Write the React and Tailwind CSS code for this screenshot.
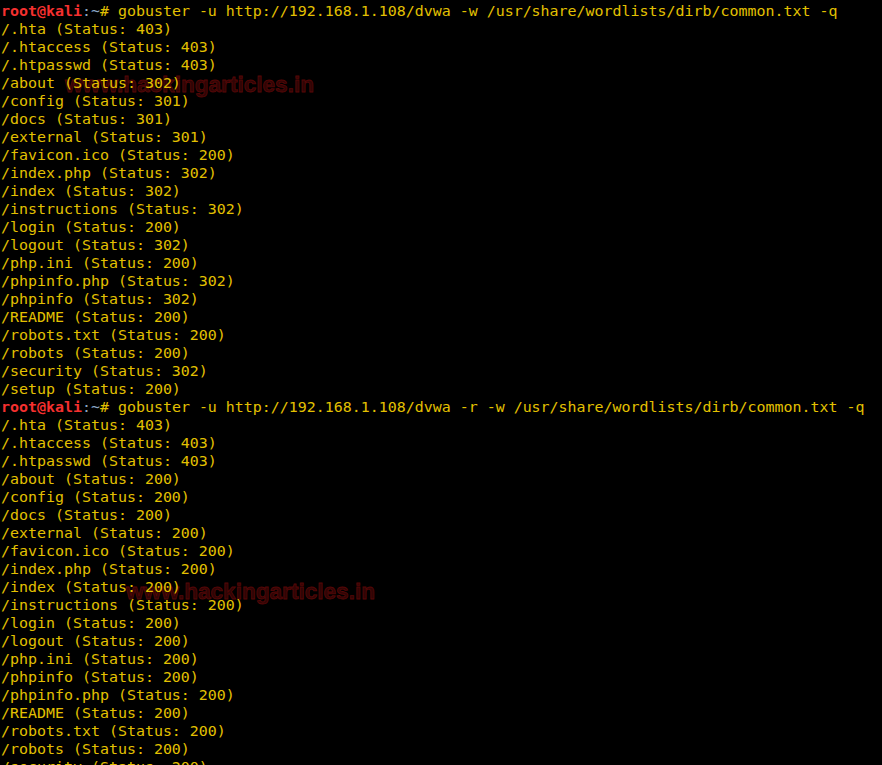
const block1 = [
  '/.hta (Status: 403)',
  '/.htaccess (Status: 403)',
  '/.htpasswd (Status: 403)',
  '/about (Status: 302)',
  '/config (Status: 301)',
  '/docs (Status: 301)',
  '/external (Status: 301)',
  '/favicon.ico (Status: 200)',
  '/index.php (Status: 302)',
  '/index (Status: 302)',
  '/instructions (Status: 302)',
  '/login (Status: 200)',
  '/logout (Status: 302)',
  '/php.ini (Status: 200)',
  '/phpinfo.php (Status: 302)',
  '/phpinfo (Status: 302)',
  '/README (Status: 200)',
  '/robots.txt (Status: 200)',
  '/robots (Status: 200)',
  '/security (Status: 302)',
  '/setup (Status: 200)',
];

const block2 = [
  '/.hta (Status: 403)',
  '/.htaccess (Status: 403)',
  '/.htpasswd (Status: 403)',
  '/about (Status: 200)',
  '/config (Status: 200)',
  '/docs (Status: 200)',
  '/external (Status: 200)',
  '/favicon.ico (Status: 200)',
  '/index.php (Status: 200)',
  '/index (Status: 200)',
  '/instructions (Status: 200)',
  '/login (Status: 200)',
  '/logout (Status: 200)',
  '/php.ini (Status: 200)',
  '/phpinfo (Status: 200)',
  '/phpinfo.php (Status: 200)',
  '/README (Status: 200)',
  '/robots.txt (Status: 200)',
  '/robots (Status: 200)',
  '/security (Status: 200)',
];

function Prompt({ cmd }) {
  return (
    <div>
      <span className="font-bold text-[#f5302f]">root@kali</span>
      <span className="text-[#8aa6c4]">:~</span>
      <span>{'# ' + cmd}</span>
    </div>
  );
}

// faint site watermark baked into the screenshot
function Watermark({ className }) {
  return (
    <div
      className={
        'absolute z-0 select-none whitespace-nowrap text-[22.6px] leading-none font-bold text-[#300505] [-webkit-text-stroke:0.8px_#560707] ' +
        className
      }
      style={{ fontFamily: '"Liberation Sans", Arial, sans-serif' }}
    >
      www.hackingarticles.in
    </div>
  );
}

export default function App() {
  return (
    <div className="relative h-[765px] w-[882px] overflow-hidden bg-black">
      <Watermark className="left-[65px] top-[74px]" />
      <Watermark className="left-[126px] top-[581px]" />
      <div
        className="relative z-10 pt-[2px] pl-[1px] text-[14.95px] leading-[18px] whitespace-pre text-[#e3c000]"
        style={{ fontFamily: '"DejaVu Sans Mono", monospace' }}
      >
        <Prompt cmd="gobuster -u http://192.168.1.108/dvwa -w /usr/share/wordlists/dirb/common.txt -q" />
        {block1.map((l, i) => (
          <div key={'a' + i}>{l}</div>
        ))}
        <Prompt cmd="gobuster -u http://192.168.1.108/dvwa -r -w /usr/share/wordlists/dirb/common.txt -q" />
        {block2.map((l, i) => (
          <div key={'b' + i}>{l}</div>
        ))}
      </div>
    </div>
  );
}
